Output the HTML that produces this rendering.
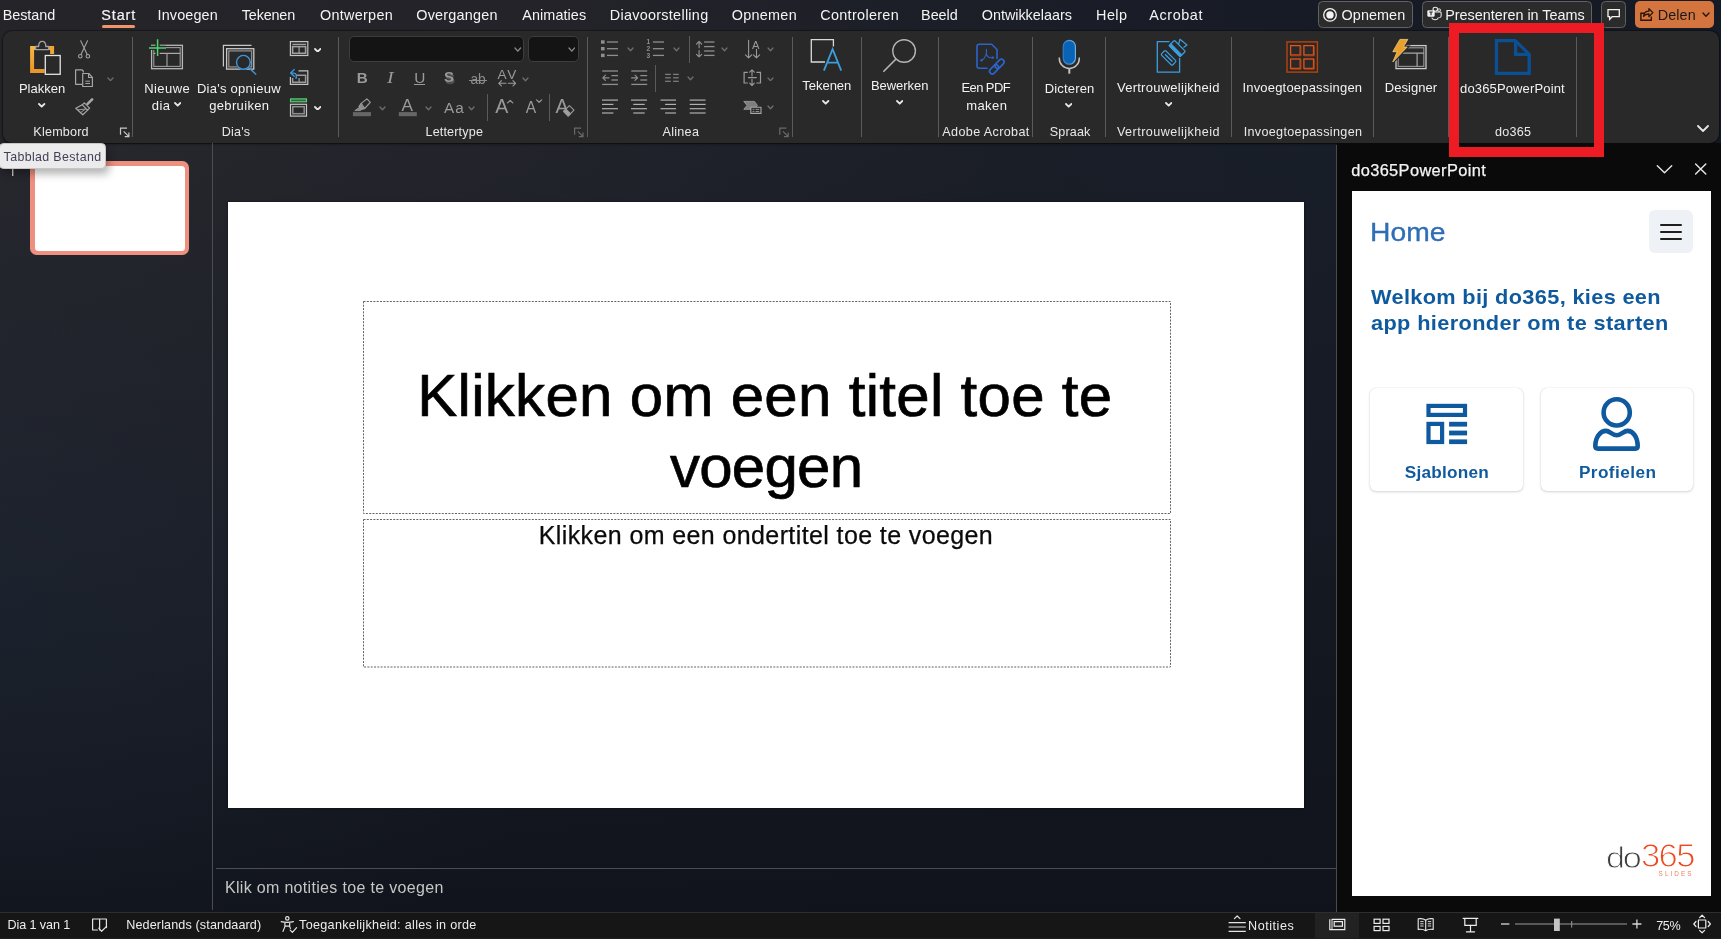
<!DOCTYPE html>
<html lang="nl"><head><meta charset="utf-8"><title>do365PowerPoint</title>
<style>
html,body{margin:0;padding:0;}
body{width:1721px;height:939px;overflow:hidden;position:relative;background:#14171f;font-family:"Liberation Sans",sans-serif;}
#root{will-change:transform;position:absolute;left:0;top:0;width:1721px;height:939px;overflow:hidden;background:radial-gradient(ellipse 620px 430px at 0px 600px,rgba(30,46,66,.30) 0%,rgba(30,46,66,.16) 50%,rgba(30,46,66,0) 100%),linear-gradient(to bottom,rgba(16,19,27,0) 0%,rgba(16,19,27,.5) 55%,rgba(16,19,27,1) 100%),linear-gradient(to right,#2b2b31 0%,#29292f 12%,#22242d 41%,#1c2029 58%,#1a202b 76%,#18202b 100%);}
.a{position:absolute;display:block;}
.t{position:absolute;display:block;white-space:pre;font-family:"Liberation Sans",sans-serif;}
</style></head><body><div id="root">
<div class="a" style="left:0.00px;top:0.00px;width:1721.00px;height:143.50px;background:linear-gradient(to right,#252429 0%,#232329 33%,#1d1f28 52%,#171b26 75%,#161a25 100%);"></div>
<div class="a" style="left:2.90px;top:30.50px;width:1716.10px;height:112.60px;background:#292929;border-radius:9px;box-shadow:0 0 0 1px rgba(0,0,0,.28),0 1px 3px rgba(0,0,0,.5);"></div>
<div class="a" style="left:212.00px;top:143.00px;width:1.00px;height:767.00px;background:#4c4d52;"></div>
<div class="a" style="left:215.50px;top:868.20px;width:1120.50px;height:1.00px;background:#4c4d52;"></div>
<div class="a" style="left:227.50px;top:201.50px;width:1076.80px;height:606.00px;background:#ffffff;box-shadow:0 0 2px rgba(0,0,0,.6);"></div>
<svg class="a" style="left:362.00px;top:300.00px;" width="811.00" height="369.00" viewBox="0 0 811 369" preserveAspectRatio="none" fill="none"><rect x="1.5" y="1.5" width="807" height="212" stroke="#646464" stroke-width="1" stroke-dasharray="2 1.3"/><rect x="1.5" y="219.5" width="807" height="147.5" stroke="#646464" stroke-width="1" stroke-dasharray="2 1.3"/></svg>
<div class="a" style="left:1336.00px;top:145.00px;width:1.00px;height:767.00px;background:#4a4a4a;"></div>
<div class="a" style="left:1337.00px;top:143.00px;width:384.00px;height:769.00px;background:#0a0a0a;"></div>
<div class="a" style="left:1352.20px;top:190.90px;width:359.20px;height:704.70px;background:#ffffff;"></div>
<div class="a" style="left:0.00px;top:911.70px;width:1721.00px;height:27.30px;background:#161616;border-top:1.2px solid #2e2e2e;box-sizing:border-box;"></div>
<div class="a" style="left:1314.70px;top:913.00px;width:44.30px;height:26.00px;background:#222222;"></div>
<span class="t" style="left:2.78px;top:7.91px;font-size:14.40px;line-height:14.40px;letter-spacing:-0.067px;color:#f4f4f4;">Bestand</span>
<span class="t" style="left:101.28px;top:7.91px;font-size:14.40px;line-height:14.40px;letter-spacing:0.882px;color:#f4f4f4;-webkit-text-stroke:0.2px #f4f4f4;">Start</span>
<span class="t" style="left:157.58px;top:7.91px;font-size:14.40px;line-height:14.40px;letter-spacing:0.127px;color:#f4f4f4;">Invoegen</span>
<span class="t" style="left:241.78px;top:7.91px;font-size:14.40px;line-height:14.40px;letter-spacing:-0.167px;color:#f4f4f4;">Tekenen</span>
<span class="t" style="left:320.08px;top:7.91px;font-size:14.40px;line-height:14.40px;letter-spacing:0.275px;color:#f4f4f4;">Ontwerpen</span>
<span class="t" style="left:416.28px;top:7.91px;font-size:14.40px;line-height:14.40px;letter-spacing:0.220px;color:#f4f4f4;">Overgangen</span>
<span class="t" style="left:522.28px;top:7.91px;font-size:14.40px;line-height:14.40px;letter-spacing:0.089px;color:#f4f4f4;">Animaties</span>
<span class="t" style="left:609.78px;top:7.91px;font-size:14.40px;line-height:14.40px;letter-spacing:0.285px;color:#f4f4f4;">Diavoorstelling</span>
<span class="t" style="left:731.78px;top:7.91px;font-size:14.40px;line-height:14.40px;letter-spacing:0.283px;color:#f4f4f4;">Opnemen</span>
<span class="t" style="left:820.28px;top:7.91px;font-size:14.40px;line-height:14.40px;letter-spacing:0.320px;color:#f4f4f4;">Controleren</span>
<span class="t" style="left:921.08px;top:7.91px;font-size:14.40px;line-height:14.40px;letter-spacing:-0.048px;color:#f4f4f4;">Beeld</span>
<span class="t" style="left:981.78px;top:7.91px;font-size:14.40px;line-height:14.40px;letter-spacing:-0.024px;color:#f4f4f4;">Ontwikkelaars</span>
<span class="t" style="left:1096.08px;top:7.91px;font-size:14.40px;line-height:14.40px;letter-spacing:0.408px;color:#f4f4f4;">Help</span>
<span class="t" style="left:1149.28px;top:7.91px;font-size:14.40px;line-height:14.40px;letter-spacing:0.602px;color:#f4f4f4;">Acrobat</span>
<div class="a" style="left:102.00px;top:25.00px;width:33.00px;height:2.50px;background:#f2946a;border-radius:1.5px;"></div>
<div class="a" style="left:1318.20px;top:1.00px;width:94.40px;height:27.00px;background:#2b2b2b;border:1px solid #616161;border-radius:4.5px;box-sizing:border-box;"></div>
<div class="a" style="left:1422.30px;top:1.00px;width:169.30px;height:27.00px;background:#2b2b2b;border:1px solid #616161;border-radius:4.5px;box-sizing:border-box;"></div>
<div class="a" style="left:1601.30px;top:1.00px;width:24.40px;height:27.00px;background:#2b2b2b;border:1px solid #616161;border-radius:4.5px;box-sizing:border-box;"></div>
<div class="a" style="left:1634.90px;top:1.00px;width:79.50px;height:26.80px;background:#d4743e;border-radius:5px;"></div>
<span class="t" style="left:1341.58px;top:7.91px;font-size:14.40px;line-height:14.40px;letter-spacing:0.067px;color:#f4f4f4;">Opnemen</span>
<span class="t" style="left:1445.28px;top:7.91px;font-size:14.40px;line-height:14.40px;letter-spacing:-0.019px;color:#f4f4f4;">Presenteren in Teams</span>
<span class="t" style="left:1657.78px;top:7.91px;font-size:14.40px;line-height:14.40px;letter-spacing:0.079px;color:#1a1a1a;">Delen</span>
<svg class="a" style="left:1322.00px;top:7.00px;" width="16.00" height="16.00" viewBox="0 0 16 16" preserveAspectRatio="none" fill="none"><circle cx="8" cy="7.9" r="6.3" stroke="#f4f4f4" stroke-width="1.3"/><circle cx="8" cy="7.9" r="3.7" fill="#f4f4f4"/></svg>
<svg class="a" style="left:1425.95px;top:6.40px;" width="16.40" height="14.16" viewBox="0 0 17 17" preserveAspectRatio="none" fill="none"><circle cx="9.6" cy="3.9" r="2.3" stroke="#eee" stroke-width="1.1"/><circle cx="13.6" cy="4.9" r="1.5" stroke="#eee" stroke-width="1"/><path d="M8.5 7.2h6.3a.9.9 0 0 1 .9.9v3.6a2.6 2.6 0 0 1-2.6 2.6h-.4a3.6 3.6 0 0 1-6.8-.3" stroke="#eee" stroke-width="1.1"/><rect x="1.4" y="5.2" width="7.6" height="7.6" rx="1" fill="#f0f0f0"/><path d="M3.4 7.3h3.6M5.2 7.3v3.8" stroke="#2b2b2b" stroke-width="1.2"/></svg>
<svg class="a" style="left:1606.00px;top:8.00px;" width="16.00" height="14.00" viewBox="0 0 16 14" preserveAspectRatio="none" fill="none"><path d="M2 1.7h11.3v7H6.2L3.6 11.4V8.7H2z" stroke="#f4f4f4" stroke-width="1.3" stroke-linejoin="miter"/></svg>
<svg class="a" style="left:1639.00px;top:6.00px;" width="16.00" height="16.00" viewBox="0 0 16 16" preserveAspectRatio="none" fill="none"><path d="M5.2 7.2H1.9v7h10.4v-3.6" stroke="#2a1608" stroke-width="1.4" fill="none"/><path d="M4.6 10.4c.3-3.4 2.4-5.2 5.3-5.2V2.7l4 3.9-4 3.9V8c-2.2-.1-3.9.5-5.3 2.4z" stroke="#2a1608" stroke-width="1.3" stroke-linejoin="round"/></svg>
<svg class="a" style="left:1702.00px;top:12.20px" width="8.00" height="5.20" viewBox="0 0 8.00 5.20" fill="none"><path d="M1 1 L4.00 4.20 L7.00 1" stroke="#2a1608" stroke-width="1.4" stroke-linecap="round" stroke-linejoin="round"/></svg>
<div class="a" style="left:132.10px;top:37.00px;width:1.00px;height:99.50px;background:#5a5a5a;"></div>
<div class="a" style="left:338.10px;top:37.00px;width:1.00px;height:99.50px;background:#5a5a5a;"></div>
<div class="a" style="left:586.80px;top:37.00px;width:1.00px;height:99.50px;background:#5a5a5a;"></div>
<div class="a" style="left:791.70px;top:37.00px;width:1.00px;height:99.50px;background:#5a5a5a;"></div>
<div class="a" style="left:861.00px;top:37.00px;width:1.00px;height:99.50px;background:#5a5a5a;"></div>
<div class="a" style="left:938.30px;top:37.00px;width:1.00px;height:99.50px;background:#5a5a5a;"></div>
<div class="a" style="left:1032.40px;top:37.00px;width:1.00px;height:99.50px;background:#5a5a5a;"></div>
<div class="a" style="left:1105.00px;top:37.00px;width:1.00px;height:99.50px;background:#5a5a5a;"></div>
<div class="a" style="left:1230.60px;top:37.00px;width:1.00px;height:99.50px;background:#5a5a5a;"></div>
<div class="a" style="left:1373.00px;top:37.00px;width:1.00px;height:99.50px;background:#5a5a5a;"></div>
<div class="a" style="left:1448.10px;top:37.00px;width:1.00px;height:99.50px;background:#5a5a5a;"></div>
<div class="a" style="left:1575.50px;top:37.00px;width:1.00px;height:99.50px;background:#5a5a5a;"></div>
<span class="t" style="left:18.95px;top:82.40px;font-size:13.00px;line-height:13.00px;letter-spacing:-0.008px;color:#f2f2f2;">Plakken</span>
<svg class="a" style="left:38.40px;top:103.25px" width="7.40" height="4.70" viewBox="0 0 7.40 4.70" fill="none"><path d="M1 1 L3.70 3.70 L6.40 1" stroke="#e6e6e6" stroke-width="1.8" stroke-linecap="round" stroke-linejoin="round"/></svg>
<span class="t" style="left:33.37px;top:126.43px;font-size:12.60px;line-height:12.60px;letter-spacing:0.191px;color:#e8e8e8;">Klembord</span>
<span class="t" style="left:144.15px;top:81.50px;font-size:13.00px;line-height:13.00px;letter-spacing:0.469px;color:#f2f2f2;">Nieuwe</span>
<span class="t" style="left:151.85px;top:99.30px;font-size:13.00px;line-height:13.00px;letter-spacing:0.376px;color:#f2f2f2;">dia</span>
<svg class="a" style="left:173.50px;top:102.15px" width="7.40" height="4.70" viewBox="0 0 7.40 4.70" fill="none"><path d="M1 1 L3.70 3.70 L6.40 1" stroke="#e6e6e6" stroke-width="1.8" stroke-linecap="round" stroke-linejoin="round"/></svg>
<span class="t" style="left:196.95px;top:81.50px;font-size:13.00px;line-height:13.00px;letter-spacing:0.264px;color:#f2f2f2;">Dia&#x27;s opnieuw</span>
<span class="t" style="left:209.15px;top:99.30px;font-size:13.00px;line-height:13.00px;letter-spacing:0.350px;color:#f2f2f2;">gebruiken</span>
<span class="t" style="left:221.87px;top:126.43px;font-size:12.60px;line-height:12.60px;letter-spacing:0.137px;color:#e8e8e8;">Dia&#x27;s</span>
<span class="t" style="left:425.47px;top:126.43px;font-size:12.60px;line-height:12.60px;letter-spacing:0.158px;color:#e8e8e8;">Lettertype</span>
<span class="t" style="left:662.47px;top:126.43px;font-size:12.60px;line-height:12.60px;letter-spacing:0.287px;color:#e8e8e8;">Alinea</span>
<span class="t" style="left:802.15px;top:78.90px;font-size:13.00px;line-height:13.00px;letter-spacing:0.008px;color:#f2f2f2;">Tekenen</span>
<svg class="a" style="left:822.30px;top:99.95px" width="7.40" height="4.70" viewBox="0 0 7.40 4.70" fill="none"><path d="M1 1 L3.70 3.70 L6.40 1" stroke="#e6e6e6" stroke-width="1.8" stroke-linecap="round" stroke-linejoin="round"/></svg>
<span class="t" style="left:870.95px;top:78.90px;font-size:13.00px;line-height:13.00px;letter-spacing:-0.044px;color:#f2f2f2;">Bewerken</span>
<svg class="a" style="left:896.00px;top:99.95px" width="7.40" height="4.70" viewBox="0 0 7.40 4.70" fill="none"><path d="M1 1 L3.70 3.70 L6.40 1" stroke="#e6e6e6" stroke-width="1.8" stroke-linecap="round" stroke-linejoin="round"/></svg>
<span class="t" style="left:961.55px;top:81.30px;font-size:13.00px;line-height:13.00px;letter-spacing:-0.607px;color:#f2f2f2;">Een PDF</span>
<span class="t" style="left:966.15px;top:99.00px;font-size:13.00px;line-height:13.00px;letter-spacing:0.445px;color:#f2f2f2;">maken</span>
<span class="t" style="left:942.37px;top:126.43px;font-size:12.60px;line-height:12.60px;letter-spacing:0.358px;color:#e8e8e8;">Adobe Acrobat</span>
<span class="t" style="left:1044.75px;top:81.90px;font-size:13.00px;line-height:13.00px;letter-spacing:0.170px;color:#f2f2f2;">Dicteren</span>
<svg class="a" style="left:1065.10px;top:103.35px" width="7.40" height="4.70" viewBox="0 0 7.40 4.70" fill="none"><path d="M1 1 L3.70 3.70 L6.40 1" stroke="#e6e6e6" stroke-width="1.8" stroke-linecap="round" stroke-linejoin="round"/></svg>
<span class="t" style="left:1049.77px;top:126.43px;font-size:12.60px;line-height:12.60px;letter-spacing:0.127px;color:#e8e8e8;">Spraak</span>
<span class="t" style="left:1116.95px;top:81.30px;font-size:13.00px;line-height:13.00px;letter-spacing:0.264px;color:#f2f2f2;">Vertrouwelijkheid</span>
<svg class="a" style="left:1164.60px;top:102.45px" width="7.40" height="4.70" viewBox="0 0 7.40 4.70" fill="none"><path d="M1 1 L3.70 3.70 L6.40 1" stroke="#e6e6e6" stroke-width="1.8" stroke-linecap="round" stroke-linejoin="round"/></svg>
<span class="t" style="left:1116.97px;top:126.43px;font-size:12.60px;line-height:12.60px;letter-spacing:0.451px;color:#e8e8e8;">Vertrouwelijkheid</span>
<span class="t" style="left:1242.45px;top:81.30px;font-size:13.00px;line-height:13.00px;letter-spacing:0.190px;color:#f2f2f2;">Invoegtoepassingen</span>
<span class="t" style="left:1243.67px;top:126.43px;font-size:12.60px;line-height:12.60px;letter-spacing:0.328px;color:#e8e8e8;">Invoegtoepassingen</span>
<span class="t" style="left:1384.75px;top:81.30px;font-size:13.00px;line-height:13.00px;letter-spacing:0.053px;color:#f2f2f2;">Designer</span>
<span class="t" style="left:1460.05px;top:81.50px;font-size:13.00px;line-height:13.00px;letter-spacing:0.141px;color:#f2f2f2;">do365PowerPoint</span>
<span class="t" style="left:1494.97px;top:126.43px;font-size:12.60px;line-height:12.60px;letter-spacing:0.281px;color:#e8e8e8;">do365</span>
<svg class="a" style="left:1696.60px;top:124.50px" width="12.00" height="7.00" viewBox="0 0 12.00 7.00" fill="none"><path d="M1 1 L6.00 6.00 L11.00 1" stroke="#e6e6e6" stroke-width="1.8" stroke-linecap="round" stroke-linejoin="round"/></svg>
<div class="a" style="left:348.80px;top:36.30px;width:175.50px;height:25.90px;background:#141414;border:1px solid #3d3d3d;border-radius:5px;box-sizing:border-box;"></div>
<div class="a" style="left:527.80px;top:36.30px;width:50.90px;height:25.90px;background:#141414;border:1px solid #3d3d3d;border-radius:5px;box-sizing:border-box;"></div>
<svg class="a" style="left:514.10px;top:47.30px" width="7.60" height="5.20" viewBox="0 0 7.60 5.20" fill="none"><path d="M1 1 L3.80 4.20 L6.60 1" stroke="#8a8a8a" stroke-width="1.3" stroke-linecap="round" stroke-linejoin="round"/></svg>
<svg class="a" style="left:567.70px;top:47.30px" width="7.60" height="5.20" viewBox="0 0 7.60 5.20" fill="none"><path d="M1 1 L3.80 4.20 L6.60 1" stroke="#8a8a8a" stroke-width="1.3" stroke-linecap="round" stroke-linejoin="round"/></svg>
<svg class="a" style="left:106.70px;top:76.75px" width="7.00" height="4.70" viewBox="0 0 7.00 4.70" fill="none"><path d="M1 1 L3.50 3.70 L6.00 1" stroke="#6e6e6e" stroke-width="1.3" stroke-linecap="round" stroke-linejoin="round"/></svg>
<svg class="a" style="left:313.70px;top:47.55px" width="7.40" height="4.70" viewBox="0 0 7.40 4.70" fill="none"><path d="M1 1 L3.70 3.70 L6.40 1" stroke="#e6e6e6" stroke-width="1.8" stroke-linecap="round" stroke-linejoin="round"/></svg>
<svg class="a" style="left:313.70px;top:105.65px" width="7.40" height="4.70" viewBox="0 0 7.40 4.70" fill="none"><path d="M1 1 L3.70 3.70 L6.40 1" stroke="#e6e6e6" stroke-width="1.8" stroke-linecap="round" stroke-linejoin="round"/></svg>
<span class="t" style="left:356.84px;top:69.73px;font-size:15.20px;line-height:15.20px;letter-spacing:-1.157px;color:#9a9a9a;font-weight:bold;">B</span>
<span class="t" style="left:386.8px;top:69.70px;font-size:16px;line-height:16px;color:#9a9a9a;font-style:italic;font-family:'Liberation Serif',serif;transform:scaleX(1.25);transform-origin:0 0;">I</span>
<span class="t" style="left:414.23px;top:69.86px;font-size:15.40px;line-height:15.40px;letter-spacing:-0.781px;color:#9a9a9a;">U</span>
<div class="a" style="left:414.00px;top:84.00px;width:10.50px;height:1.10px;background:#9a9a9a;"></div>
<span class="t" style="left:444px;top:69.40px;font-size:15px;line-height:15px;color:#9a9a9a;font-weight:bold;text-shadow:1px 1.6px 1px rgba(150,150,150,.45);">S</span>
<span class="t" style="left:470.41px;top:73.12px;font-size:13.80px;line-height:13.80px;letter-spacing:-0.070px;color:#8c8c8c;">ab</span>
<div class="a" style="left:469.00px;top:79.50px;width:18.10px;height:1.10px;background:#8c8c8c;"></div>
<span class="t" style="left:497.62px;top:68.49px;font-size:13.60px;line-height:13.60px;letter-spacing:1.527px;color:#9a9a9a;">AV</span>
<svg class="a" style="left:522.30px;top:76.85px" width="7.00" height="4.70" viewBox="0 0 7.00 4.70" fill="none"><path d="M1 1 L3.50 3.70 L6.00 1" stroke="#6e6e6e" stroke-width="1.3" stroke-linecap="round" stroke-linejoin="round"/></svg>
<svg class="a" style="left:378.70px;top:105.85px" width="7.00" height="4.70" viewBox="0 0 7.00 4.70" fill="none"><path d="M1 1 L3.50 3.70 L6.00 1" stroke="#6e6e6e" stroke-width="1.3" stroke-linecap="round" stroke-linejoin="round"/></svg>
<span class="t" style="left:401.44px;top:97.04px;font-size:17.20px;line-height:17.20px;letter-spacing:1.248px;color:#9a9a9a;">A</span>
<svg class="a" style="left:424.80px;top:105.85px" width="7.00" height="4.70" viewBox="0 0 7.00 4.70" fill="none"><path d="M1 1 L3.50 3.70 L6.00 1" stroke="#6e6e6e" stroke-width="1.3" stroke-linecap="round" stroke-linejoin="round"/></svg>
<span class="t" style="left:443.94px;top:99.95px;font-size:15.30px;line-height:15.30px;letter-spacing:1.216px;color:#9a9a9a;">Aa</span>
<svg class="a" style="left:468.40px;top:105.95px" width="7.00" height="4.70" viewBox="0 0 7.00 4.70" fill="none"><path d="M1 1 L3.50 3.70 L6.00 1" stroke="#6e6e6e" stroke-width="1.3" stroke-linecap="round" stroke-linejoin="round"/></svg>
<div class="a" style="left:487.10px;top:94.00px;width:1.00px;height:26.80px;background:#5a5a5a;"></div>
<span class="t" style="left:495.22px;top:97.11px;font-size:19.60px;line-height:19.60px;letter-spacing:1.087px;color:#9a9a9a;">A</span>
<span class="t" style="left:525.72px;top:100.49px;font-size:15.60px;line-height:15.60px;letter-spacing:1.655px;color:#9a9a9a;">A</span>
<div class="a" style="left:548.70px;top:94.00px;width:1.00px;height:26.80px;background:#5a5a5a;"></div>
<span class="t" style="left:555.52px;top:97.11px;font-size:19.60px;line-height:19.60px;letter-spacing:-1.013px;color:#9a9a9a;">A</span>
<svg class="a" style="left:627.40px;top:47.45px" width="7.00" height="4.70" viewBox="0 0 7.00 4.70" fill="none"><path d="M1 1 L3.50 3.70 L6.00 1" stroke="#6e6e6e" stroke-width="1.3" stroke-linecap="round" stroke-linejoin="round"/></svg>
<span class="t" style="left:646.6px;top:38.40px;font-size:6.6px;line-height:7px;color:#8e8e8e;font-weight:bold;">1</span>
<span class="t" style="left:646.6px;top:45.10px;font-size:6.6px;line-height:7px;color:#8e8e8e;font-weight:bold;">2</span>
<span class="t" style="left:646.6px;top:51.80px;font-size:6.6px;line-height:7px;color:#8e8e8e;font-weight:bold;">3</span>
<svg class="a" style="left:673.20px;top:47.45px" width="7.00" height="4.70" viewBox="0 0 7.00 4.70" fill="none"><path d="M1 1 L3.50 3.70 L6.00 1" stroke="#6e6e6e" stroke-width="1.3" stroke-linecap="round" stroke-linejoin="round"/></svg>
<div class="a" style="left:688.60px;top:36.10px;width:1.00px;height:26.50px;background:#5a5a5a;"></div>
<svg class="a" style="left:720.50px;top:47.45px" width="7.00" height="4.70" viewBox="0 0 7.00 4.70" fill="none"><path d="M1 1 L3.50 3.70 L6.00 1" stroke="#6e6e6e" stroke-width="1.3" stroke-linecap="round" stroke-linejoin="round"/></svg>
<span class="t" style="left:752.04px;top:39.52px;font-size:11.20px;line-height:11.20px;letter-spacing:1.550px;color:#9a9a9a;">A</span>
<svg class="a" style="left:767.40px;top:47.45px" width="7.00" height="4.70" viewBox="0 0 7.00 4.70" fill="none"><path d="M1 1 L3.50 3.70 L6.00 1" stroke="#6e6e6e" stroke-width="1.3" stroke-linecap="round" stroke-linejoin="round"/></svg>
<div class="a" style="left:655.00px;top:65.00px;width:1.00px;height:26.60px;background:#5a5a5a;"></div>
<svg class="a" style="left:686.70px;top:76.35px" width="7.00" height="4.70" viewBox="0 0 7.00 4.70" fill="none"><path d="M1 1 L3.50 3.70 L6.00 1" stroke="#6e6e6e" stroke-width="1.3" stroke-linecap="round" stroke-linejoin="round"/></svg>
<svg class="a" style="left:767.40px;top:76.65px" width="7.00" height="4.70" viewBox="0 0 7.00 4.70" fill="none"><path d="M1 1 L3.50 3.70 L6.00 1" stroke="#6e6e6e" stroke-width="1.3" stroke-linecap="round" stroke-linejoin="round"/></svg>
<svg class="a" style="left:767.40px;top:105.35px" width="7.00" height="4.70" viewBox="0 0 7.00 4.70" fill="none"><path d="M1 1 L3.50 3.70 L6.00 1" stroke="#6e6e6e" stroke-width="1.3" stroke-linecap="round" stroke-linejoin="round"/></svg>
<div class="a" style="left:1449.1px;top:23.3px;width:155px;height:133.5px;border:10.2px solid #ed1c24;box-sizing:border-box;"></div>
<svg class="a" style="left:0;top:0" width="1721" height="160" viewBox="0 0 1721 160" fill="none"><defs><linearGradient id="og" x1="0" y1="0" x2="0" y2="1"><stop offset="0" stop-color="#f6b545"/><stop offset="1" stop-color="#ea9526"/></linearGradient></defs><path d="M36 47.9H32.1V70.9H44.6" stroke="url(#og)" stroke-width="4" stroke-linejoin="miter" fill="none"/><path d="M48.6 47.9H52.1V54" stroke="#f0a636" stroke-width="4" fill="none"/><path d="M35.6 49.6V46.5H38.6C38.6 39.6 45.8 39.6 45.8 46.5H48.7V49.6Z" stroke="#a2a2a2" stroke-width="1.3" fill="#292929" stroke-linejoin="round"/><rect x="45.3" y="55.5" width="14.9" height="18.8" stroke="#e4e4e4" stroke-width="1.3" fill="#292929"/><g stroke="#a6a6a6" stroke-width="1.05" fill="none" stroke-linecap="round"><path d="M80.7 40.8L87.2 54.5M87.5 40.8L81 54.5"/><circle cx="80.3" cy="56.2" r="1.75"/><circle cx="87.9" cy="56.2" r="1.75"/></g><g stroke="#a6a6a6" stroke-width="1.2" fill="none" stroke-linejoin="round"><path d="M82 84.3H75.6V69.9H81.6Q83.3 69.9 83.4 72.5"/><path d="M82.7 73.5H88.8L92.4 77.3V86.5H82.7Z" fill="#292929"/><path d="M88.6 73.7V77.5H92.2"/><path d="M85.3 81.2H90M85.3 83.5H90" stroke-width="1"/></g><g stroke="#a6a6a6" stroke-width="1.2" fill="none" stroke-linejoin="round" stroke-linecap="round"><path d="M92.1 99.4L87.6 103.9" stroke-width="2.6"/><path d="M84.3 102.8L89.6 108.1L87.6 110.1L82.3 104.8Z"/><path d="M82.3 104.8L75.8 108.2L82.8 114.8L87.6 110.1"/><path d="M78.2 109.9L85.5 109M80.6 112.6L85.5 109" stroke-width="0.9"/></g><g stroke="#c8c8c8" stroke-width="1.2" fill="none"><path d="M120.5 134.7V128.2H127.0"/><path d="M123.7 131.4L128.7 136.4M128.9 132.4V136.6H124.7"/></g><g stroke="#6a6a6a" stroke-width="1.2" fill="none"><path d="M574.6 134.7V128.2H581.1"/><path d="M577.8 131.4L582.8 136.4M583.0 132.4V136.6H578.8"/></g><g stroke="#6a6a6a" stroke-width="1.2" fill="none"><path d="M779.8 134.7V128.2H786.3"/><path d="M783.0 131.4L788.0 136.4M788.2 132.4V136.6H784.0"/></g><g fill="none" stroke="#b8b8b8" stroke-width="1.3"><rect x="151.6" y="45.3" width="30.8" height="23.4"/><rect x="153.8" y="47.6" width="26.4" height="18.8" stroke="#9a9a9a" stroke-width="1.1"/><path d="M153.8 53.4H180.2M167 53.4V66.4" stroke="#a8a8a8" stroke-width="1.1"/></g><path d="M149 47.9H166M157.6 39.2V56" stroke="#292929" stroke-width="4.2"/><path d="M149 47.9H166M157.6 39.2V56" stroke="#4ed66c" stroke-width="1.5"/><g fill="none"><path d="M223.4 66.5V45.3H251.5" stroke="#c8c8c8" stroke-width="1.2"/><rect x="226.6" y="48.7" width="27.2" height="20.4" stroke="#c8c8c8" stroke-width="1.3"/><rect x="228.8" y="50.9" width="22.8" height="16" stroke="#8c8c8c" stroke-width="1.3"/><circle cx="243.4" cy="62.3" r="7.6" fill="#292929"/><circle cx="243.4" cy="62.3" r="6.9" stroke="#3a96dd" stroke-width="1.4"/><path d="M248.4 67.4L256.2 74.4" stroke="#3a96dd" stroke-width="1.4"/></g><g fill="none" stroke="#c4c4c4" stroke-width="1.2"><rect x="290.4" y="41.6" width="17.4" height="13.9"/><rect x="292.6" y="46.6" width="13" height="6.7" stroke="#a0a0a0" stroke-width="1.6"/><path d="M292.4 44.4H306M299.1 46.6V53.3" stroke="#a0a0a0"/></g><g fill="none" stroke="#c4c4c4" stroke-width="1.2"><path d="M298.5 70.8H307.8V84.4H290.4V77"/><path d="M296.5 75.2H305.6V82.2H292.6V78" stroke="#9a9a9a" stroke-width="1.5"/><path d="M299.1 78V82" stroke="#9a9a9a"/><path d="M296 78.4C297.7 73.6 294.5 72.6 291 72.9M294.2 69.6L290.6 72.9L294.2 76.2" stroke="#3a96dd" stroke-width="1.4" stroke-linecap="round" stroke-linejoin="round"/></g><g fill="none"><rect x="290.5" y="98.9" width="16" height="2.9" fill="#2c6b3c" stroke="#5fd37a" stroke-width="1.1"/><rect x="290.5" y="104.3" width="16" height="11.8" stroke="#c4c4c4" stroke-width="1.2"/><rect x="292.8" y="106.7" width="11.4" height="7" stroke="#8e8e8e" stroke-width="1.5"/></g><g stroke="#9a9a9a" stroke-width="1.1" fill="none" stroke-linecap="round" stroke-linejoin="round"><path d="M498.8 83.3H506M501.4 80.7L498.8 83.3L501.4 85.9M508.4 83.3H515.6M513 80.7L515.6 83.3L513 85.9"/></g><rect x="352.9" y="112.1" width="18.1" height="4.1" fill="#666"/><g stroke="#9a9a9a" stroke-width="1.2" fill="none" stroke-linejoin="round"><path d="M361.2 103.4L366.9 98.9L370.3 102.4L364.6 108.5Z"/><path d="M361.2 103.4L359 106.5L361.7 109.3L364.6 108.5" fill="#8a8a8a"/><path d="M359.3 107.4L354.8 110.6H360.6L361.7 109.3Z" fill="#8a8a8a" stroke-width="0.8"/></g><rect x="398.8" y="112.1" width="18" height="4.1" fill="#666"/><path d="M507.6 102.9L510.2 100.5L512.8 102.9" stroke="#9a9a9a" stroke-width="1.2" fill="none" stroke-linecap="round" stroke-linejoin="round"/><path d="M536.5 99.9L539.1 102.3L541.7 99.9" stroke="#9a9a9a" stroke-width="1.2" fill="none" stroke-linecap="round" stroke-linejoin="round"/><g stroke="#9a9a9a" stroke-width="1.1" stroke-linejoin="round"><path d="M569.4 105.6L574 110.1L568.2 116L563.6 111.4Z" fill="#292929"/><path d="M565.9 109.1L570.5 113.7L568.2 116L563.6 111.4Z" fill="#a0a0a0"/></g><rect x="601" y="40.3" width="3.6" height="3.4" fill="#8e8e8e"/><path d="M607.0 42.0H618.0" stroke="#8e8e8e" stroke-width="1.3"/><rect x="601" y="47.0" width="3.6" height="3.4" fill="#8e8e8e"/><path d="M607.0 48.7H618.0" stroke="#8e8e8e" stroke-width="1.3"/><rect x="601" y="53.7" width="3.6" height="3.4" fill="#8e8e8e"/><path d="M607.0 55.4H618.0" stroke="#8e8e8e" stroke-width="1.3"/><path d="M652.9 42.0H664.0" stroke="#8e8e8e" stroke-width="1.3"/><path d="M652.9 48.7H664.0" stroke="#8e8e8e" stroke-width="1.3"/><path d="M652.9 55.4H664.0" stroke="#8e8e8e" stroke-width="1.3"/><path d="M704.1 42.0H714.5" stroke="#8e8e8e" stroke-width="1.3"/><path d="M704.1 46.6H714.5" stroke="#8e8e8e" stroke-width="1.3"/><path d="M704.1 51.0H714.5" stroke="#8e8e8e" stroke-width="1.3"/><path d="M704.1 55.4H714.5" stroke="#8e8e8e" stroke-width="1.3"/><g stroke="#8e8e8e" stroke-width="1.2" fill="none" stroke-linecap="round" stroke-linejoin="round"><path d="M699.1 41.6V47.8M696.5 44.1L699.1 41.5L701.7 44.1M699.1 50.6V56.8M696.5 54.3L699.1 56.9L701.7 54.3"/></g><g stroke="#9a9a9a" stroke-width="1.1" fill="none" stroke-linecap="round" stroke-linejoin="round"><path d="M748.6 40.2V57.8M745.5 54.8L748.6 57.9L751.7 54.8M756.5 49.2V57.8M753.4 54.8L756.5 57.9L759.6 54.8"/></g><path d="M602.2 71.0H618.0" stroke="#8e8e8e" stroke-width="1.3"/><path d="M602.2 84.4H618.0" stroke="#8e8e8e" stroke-width="1.3"/><path d="M611.4 75.6H618.0" stroke="#8e8e8e" stroke-width="1.3"/><path d="M611.4 80.0H618.0" stroke="#8e8e8e" stroke-width="1.3"/><g stroke="#8e8e8e" stroke-width="1.2" fill="none" stroke-linecap="round" stroke-linejoin="round"><path d="M602.8 77.8H609M605.4 75.2L602.8 77.8L605.4 80.4"/></g><path d="M631.3 71.0H647.2" stroke="#8e8e8e" stroke-width="1.3"/><path d="M631.3 84.4H647.2" stroke="#8e8e8e" stroke-width="1.3"/><path d="M640.3 75.6H647.2" stroke="#8e8e8e" stroke-width="1.3"/><path d="M640.3 80.0H647.2" stroke="#8e8e8e" stroke-width="1.3"/><g stroke="#8e8e8e" stroke-width="1.2" fill="none" stroke-linecap="round" stroke-linejoin="round"><path d="M631.6 77.8H637.6M635 75.2L637.6 77.8L635 80.4"/></g><path d="M665.1 74.4H670.8" stroke="#7c7c7c" stroke-width="1.3"/><path d="M673.1 74.4H678.7" stroke="#7c7c7c" stroke-width="1.3"/><path d="M665.1 77.8H670.8" stroke="#7c7c7c" stroke-width="1.3"/><path d="M673.1 77.8H678.7" stroke="#7c7c7c" stroke-width="1.3"/><path d="M665.1 81.3H670.8" stroke="#7c7c7c" stroke-width="1.3"/><path d="M673.1 81.3H678.7" stroke="#7c7c7c" stroke-width="1.3"/><g stroke="#9a9a9a" stroke-width="1.2" fill="none" stroke-linecap="square" stroke-linejoin="miter"><path d="M747.2 72.3H744.1V83H747.2M757 72.3H760.5V83H757"/></g><g stroke="#9a9a9a" stroke-width="1.1" fill="none" stroke-linecap="round" stroke-linejoin="round"><path d="M748.4 77.6H756.4M752 70V76M749.7 72.2L752 69.9L754.3 72.2M752 79.2V85.4M749.7 83.2L752 85.5L754.3 83.2"/></g><path d="M602.0 100.1H618.0" stroke="#b0b0b0" stroke-width="1.2"/><path d="M602.0 104.4H613.4" stroke="#b0b0b0" stroke-width="1.2"/><path d="M602.0 108.7H618.0" stroke="#b0b0b0" stroke-width="1.2"/><path d="M602.0 113.0H613.4" stroke="#b0b0b0" stroke-width="1.2"/><path d="M631.0 100.1H647.0" stroke="#b0b0b0" stroke-width="1.2"/><path d="M633.3 104.4H644.7" stroke="#b0b0b0" stroke-width="1.2"/><path d="M631.0 108.7H647.0" stroke="#b0b0b0" stroke-width="1.2"/><path d="M633.3 113.0H644.7" stroke="#b0b0b0" stroke-width="1.2"/><path d="M660.5 100.1H676.0" stroke="#b0b0b0" stroke-width="1.2"/><path d="M665.1 104.4H676.0" stroke="#b0b0b0" stroke-width="1.2"/><path d="M660.5 108.7H676.0" stroke="#b0b0b0" stroke-width="1.2"/><path d="M665.1 113.0H676.0" stroke="#b0b0b0" stroke-width="1.2"/><path d="M689.7 100.1H705.6" stroke="#b0b0b0" stroke-width="1.2"/><path d="M689.7 104.4H705.6" stroke="#b0b0b0" stroke-width="1.2"/><path d="M689.7 108.7H705.6" stroke="#b0b0b0" stroke-width="1.2"/><path d="M689.7 113.0H705.6" stroke="#b0b0b0" stroke-width="1.2"/><g stroke-linejoin="round"><path d="M743.8 101.4H754.5L757.4 105.4L754.5 109.3H743.8L747 105.4Z" fill="#7e7e7e" stroke="#9a9a9a" stroke-width="0.9"/><rect x="750.8" y="107.2" width="10.2" height="6.2" fill="#292929" stroke="#a8a8a8" stroke-width="1.1"/><path d="M752.6 109.4H754.4M755.6 109.4H759.2M752.6 111.5H754.4M755.6 111.5H759.2" stroke="#9a9a9a" stroke-width="0.9"/></g><path d="M833.4 46.6V39.6H811.3V62H825" stroke="#dadada" stroke-width="1.3" fill="none"/><path d="M823.9 70.6L832.6 49.2L841.2 70.6M827 62.6H838.2" stroke="#3a9ee0" stroke-width="1.8" fill="none" stroke-linejoin="miter"/><circle cx="904.1" cy="51" r="11.3" stroke="#b6b6b6" stroke-width="1.4" fill="none"/><path d="M895.8 59.2L883.8 71.3" stroke="#b6b6b6" stroke-width="1.6" stroke-linecap="round"/><g stroke="#2b64cb" fill="none" stroke-linecap="round" stroke-linejoin="round"><path d="M987 68.3H979.2Q977 68.3 977 66.1V46.4Q977 44.2 979.2 44.2H991.6L997 49.5V58.4" stroke-width="1.6"/><path d="M986.4 49.4C987.2 53.5 985.5 58.3 981.6 60.3M986.4 54.5C987.5 56.8 989.8 58 992.6 57.6" stroke-width="1.1"/><circle cx="981.4" cy="60.4" r="0.9" stroke-width="0.9"/><circle cx="992.8" cy="57.6" r="0.9" stroke-width="0.9"/><g transform="rotate(-46 996.8 66.6)" stroke-width="1.7"><rect x="987.6" y="63.9" width="10.6" height="5.4" rx="2.7"/><rect x="995.4" y="63.9" width="10.6" height="5.4" rx="2.7"/></g></g><defs><linearGradient id="mg" x1="0" y1="0" x2="1" y2="0"><stop offset="0" stop-color="#2f7fcc"/><stop offset="1" stop-color="#78b4ea"/></linearGradient></defs><path d="M1059.3 57.6V58.4A10 10 0 0 0 1079.3 58.4V57.6" stroke="#c2c2c2" stroke-width="1.5" fill="none"/><path d="M1069.3 68.4V73.7" stroke="#c2c2c2" stroke-width="2"/><rect x="1063.2" y="40.4" width="12.2" height="23.9" rx="6.1" fill="#0a64b6" stroke="url(#mg)" stroke-width="1.1"/><g stroke="#3a9ee0" fill="none" stroke-linejoin="round"><path d="M1169.5 41.7H1157.3V72.2H1179.6V57.8" stroke-width="1.3"/><g transform="translate(1170 55) rotate(-45)"><rect x="-6.1" y="-6.8" width="6.1" height="15.7" rx="1.2" stroke-width="1.2"/><path d="M-3.05 -3.4V5.9" stroke-width="1.4" stroke-linecap="round"/><rect x="5.9" y="-7.3" width="7.6" height="15.6" rx="1" stroke-width="1.2"/><rect x="5.9" y="-7.3" width="2.9" height="15.6" fill="#3a9ee0" stroke-width="0.6"/><path d="M13.8 -1.6L18.2 -4.1L19.1 4.9L14.8 4.3" stroke-width="1.2"/></g></g><rect x="1287" y="41.9" width="30.4" height="30.2" stroke="#b4440f" stroke-width="1.4" fill="none"/><rect x="1290.6" y="45.6" width="9.6" height="9.4" stroke="#e4541a" stroke-width="1.3" fill="none"/><path d="M1301.0 45.8V55.8H1290.8" stroke="#a8400f" stroke-width="1" fill="none"/><rect x="1303.9" y="45.6" width="9.6" height="9.4" stroke="#e4541a" stroke-width="1.3" fill="none"/><path d="M1314.3 45.8V55.8H1304.1" stroke="#a8400f" stroke-width="1" fill="none"/><rect x="1290.6" y="59.0" width="9.6" height="9.4" stroke="#e4541a" stroke-width="1.3" fill="none"/><path d="M1301.0 59.2V69.2H1290.8" stroke="#a8400f" stroke-width="1" fill="none"/><rect x="1303.9" y="59.0" width="9.6" height="9.4" stroke="#e4541a" stroke-width="1.3" fill="none"/><path d="M1314.3 59.2V69.2H1304.1" stroke="#a8400f" stroke-width="1" fill="none"/><g fill="none"><rect x="1396" y="45.6" width="30" height="23" stroke="#cacaca" stroke-width="1.3"/><rect x="1398.2" y="47.8" width="25.6" height="18.6" stroke="#8e8e8e" stroke-width="1.2"/><path d="M1398.2 53.1H1423.8M1417.1 53.1V66.4" stroke="#a8a8a8" stroke-width="1.2"/></g><path d="M1399.9 39.4H1407.8L1403.4 47H1407.2L1392.8 62L1397.2 51.7H1392.8Z" fill="#292929" stroke="#292929" stroke-width="3"/><path d="M1399.9 39.4H1407.8L1403.4 47H1407.2L1392.8 62L1397.2 51.7H1392.8Z" fill="#e9a02e" stroke="#f7cf7c" stroke-width="0.8" stroke-linejoin="round"/><path d="M1496.5 40.6H1515.2L1529.2 54.4V73.4H1496.5Z" stroke="#0b4f94" stroke-width="3.3" fill="none" stroke-linejoin="miter"/><path d="M1515.6 40.6V54.4H1529.2" stroke="#0b4f94" stroke-width="3.3" fill="none"/></svg>
<div class="a" style="left:12.1px;top:160px;width:2.3px;height:15.7px;overflow:hidden;"><span class="t" style="left:-3.9px;top:4.1px;font-size:15px;line-height:15px;color:#cfcfcf;">1</span></div>
<div class="a" style="left:30.20px;top:161.30px;width:158.80px;height:93.60px;background:#ef8f7f;border-radius:6.5px;"></div>
<div class="a" style="left:34.60px;top:165.60px;width:150.60px;height:85.40px;background:#ffffff;border-radius:3.5px;"></div>
<div class="a" style="left:-1.50px;top:143.40px;width:107.50px;height:25.20px;background:#ebebeb;border:1px solid #c6c6c6;border-radius:4.5px;box-sizing:border-box;box-shadow:3px 5px 8px rgba(0,0,0,.30);"></div>
<span class="t" style="left:3.58px;top:150.80px;font-size:12.40px;line-height:12.40px;letter-spacing:0.368px;color:#453d58;">Tabblad Bestand</span>
<span class="t" style="left:417.20px;top:365.91px;font-size:60.00px;line-height:60.00px;letter-spacing:0.306px;color:#000;-webkit-text-stroke:0.7px #000;">Klikken om een titel toe te</span>
<span class="t" style="left:670.00px;top:437.41px;font-size:60.00px;line-height:60.00px;letter-spacing:-0.769px;color:#000;-webkit-text-stroke:0.7px #000;">voegen</span>
<span class="t" style="left:538.75px;top:523.04px;font-size:25.00px;line-height:25.00px;letter-spacing:0.390px;color:#0a0a0a;-webkit-text-stroke:0.25px #0a0a0a;">Klikken om een ondertitel toe te voegen</span>
<span class="t" style="left:224.90px;top:880.06px;font-size:16.00px;line-height:16.00px;letter-spacing:0.324px;color:#c6c6c6;">Klik om notities toe te voegen</span>
<span class="t" style="left:1351.18px;top:161.62px;font-size:16.40px;line-height:16.40px;letter-spacing:0.369px;color:#f4f4f4;-webkit-text-stroke:0.25px #f4f4f4;">do365PowerPoint</span>
<svg class="a" style="left:0;top:0" width="1721" height="200" viewBox="0 0 1721 200" fill="none"><path d="M1657.3 165.8L1664.5 172.8L1671.7 165.8" stroke="#e8e8e8" stroke-width="1.4" fill="none" stroke-linecap="round" stroke-linejoin="round"/><path d="M1695.6 163.9L1705.8 174.1M1705.8 163.9L1695.6 174.1" stroke="#e8e8e8" stroke-width="1.4" stroke-linecap="round"/></svg>
<span class="t" style="left:1369.58px;top:218.65px;font-size:26.40px;line-height:26.40px;letter-spacing:0.054px;color:#2f6eb6;-webkit-text-stroke:0.35px #2f6eb6;transform:scaleX(1.070);transform-origin:0 0;">Home</span>
<div class="a" style="left:1648.60px;top:209.60px;width:44.60px;height:43.80px;background:#eef2f7;border-radius:6px;"></div>
<div class="a" style="left:1660.00px;top:224.00px;width:22.20px;height:2.00px;background:#1f1f1f;border-radius:1px;"></div>
<div class="a" style="left:1660.00px;top:230.90px;width:22.20px;height:2.00px;background:#1f1f1f;border-radius:1px;"></div>
<div class="a" style="left:1660.00px;top:237.80px;width:22.20px;height:2.00px;background:#1f1f1f;border-radius:1px;"></div>
<span class="t" style="left:1370.65px;top:285.92px;font-size:21.00px;line-height:21.00px;letter-spacing:0.329px;color:#0f5a9e;font-weight:bold;transform:scaleX(1.035);transform-origin:0 0;">Welkom bij do365, kies een</span>
<span class="t" style="left:1370.65px;top:312.42px;font-size:21.00px;line-height:21.00px;letter-spacing:0.365px;color:#0f5a9e;font-weight:bold;transform:scaleX(1.035);transform-origin:0 0;">app hieronder om te starten</span>
<div class="a" style="left:1369.70px;top:387.80px;width:153.80px;height:102.80px;background:#ffffff;border-radius:6px;box-shadow:0 1px 3px rgba(0,0,0,.16),0 0 1px rgba(0,0,0,.18);"></div>
<div class="a" style="left:1540.50px;top:387.80px;width:152.70px;height:102.80px;background:#ffffff;border-radius:6px;box-shadow:0 1px 3px rgba(0,0,0,.16),0 0 1px rgba(0,0,0,.18);"></div>
<span class="t" style="left:1404.84px;top:463.74px;font-size:17.20px;line-height:17.20px;letter-spacing:0.217px;color:#0f5a9e;font-weight:bold;">Sjablonen</span>
<span class="t" style="left:1578.94px;top:463.74px;font-size:17.20px;line-height:17.20px;letter-spacing:0.428px;color:#0f5a9e;font-weight:bold;">Profielen</span>
<svg class="a" style="left:1352px;top:380px" width="360" height="120" viewBox="1352 380 360 120" fill="none"><rect x="1428.5" y="405.9" width="36.5" height="9" stroke="#0f5a9e" stroke-width="4.2" fill="none"/><rect x="1428.5" y="423.9" width="13.6" height="18.1" stroke="#0f5a9e" stroke-width="4.2" fill="none"/><rect x="1449.1" y="421.8" width="18" height="4.8" fill="#0f5a9e"/><rect x="1449.1" y="430.6" width="18" height="4.8" fill="#0f5a9e"/><rect x="1449.1" y="439.4" width="18" height="4.7" fill="#0f5a9e"/><circle cx="1616.7" cy="412.4" r="13.1" stroke="#0f5a9e" stroke-width="4.6" fill="none"/><path d="M1598 448.6H1635.4Q1637.7 448.6 1637.7 446.3C1637.7 437 1633 430.9 1627.5 430.9C1623.5 430.9 1621.5 435.2 1616.7 435.2C1611.9 435.2 1609.9 430.9 1605.9 430.9C1600.4 430.9 1595.3 437 1595.3 446.3Q1595.3 448.6 1598 448.6Z" stroke="#0f5a9e" stroke-width="4.6" fill="none" stroke-linejoin="round"/></svg>
<span class="t" style="left:1605.6px;top:842.61px;font-size:30px;line-height:30px;letter-spacing:-1.9px;color:#3f3f3f;-webkit-text-stroke:0.9px #fff;transform:scaleX(1.14);transform-origin:0 0;">do</span>
<span class="t" style="left:1640.6px;top:839.37px;font-size:33.6px;line-height:33px;letter-spacing:-1.6px;transform:scaleX(1.03);transform-origin:0 0;color:#ee4a1f;-webkit-text-stroke:1px #fff;">365</span>
<span class="t" style="left:1658.6px;top:870.2px;font-size:6.4px;line-height:7px;letter-spacing:2.05px;color:#f0805f;">SLIDES</span>
<span class="t" style="left:7.57px;top:919.03px;font-size:12.60px;line-height:12.60px;letter-spacing:-0.098px;color:#ededed;">Dia 1 van 1</span>
<span class="t" style="left:126.27px;top:919.03px;font-size:12.60px;line-height:12.60px;letter-spacing:0.123px;color:#ededed;">Nederlands (standaard)</span>
<span class="t" style="left:299.07px;top:919.03px;font-size:12.60px;line-height:12.60px;letter-spacing:0.308px;color:#ededed;">Toegankelijkheid: alles in orde</span>
<span class="t" style="left:1248.07px;top:919.53px;font-size:12.60px;line-height:12.60px;letter-spacing:0.521px;color:#ededed;">Notities</span>
<span class="t" style="left:1656.17px;top:919.53px;font-size:12.60px;line-height:12.60px;letter-spacing:-0.379px;color:#ededed;">75%</span>
<svg class="a" style="left:0;top:905px" width="1721" height="34" viewBox="0 905 1721 34" fill="none"><g stroke="#e4e4e4" stroke-width="1.2" fill="none" stroke-linejoin="round" stroke-linecap="round"><path d="M99.6 919.4V930M92.6 919H99.6M92.6 919V930H97.5M99.6 919H106.4V927.6"/><path d="M98.8 928.2L101.6 931.3L106.6 926.4"/></g><g stroke="#e4e4e4" stroke-width="1.2" fill="none" stroke-linejoin="round" stroke-linecap="round"><circle cx="287.3" cy="918.4" r="1.7"/><path d="M281.2 921.6C284 922.6 290.6 922.6 293.4 921.6M284.9 922.4V926.6L283 931.4M289.7 922.4V926.6L290.4 928.4M284.9 926.2H289.7"/><path d="M290.2 930.2L292.4 932.4L296.6 927.6"/></g><g stroke="#e4e4e4" stroke-width="1.2" fill="none" stroke-linecap="round" stroke-linejoin="round"><path d="M1234.4 918.6L1237.2 916L1240 918.6"/><path d="M1228.6 922.6H1245.8M1228.6 927H1245.8M1228.6 931.4H1245.8" stroke-linecap="butt"/></g><g stroke="#ececec" stroke-width="1.2" fill="none"><path d="M1329.8 919.3V929.7H1344.8V919.3H1331.6"/><rect x="1334.2" y="921.6" width="8.2" height="4.6"/><path d="M1332 919.3V929.7" stroke-width="1"/></g><rect x="1374.1" y="919.2" width="6" height="4.2" stroke="#ececec" stroke-width="1.2" fill="none"/><rect x="1383.0" y="919.2" width="6" height="4.2" stroke="#ececec" stroke-width="1.2" fill="none"/><rect x="1374.1" y="926.4" width="6" height="4.2" stroke="#ececec" stroke-width="1.2" fill="none"/><rect x="1383.0" y="926.4" width="6" height="4.2" stroke="#ececec" stroke-width="1.2" fill="none"/><g stroke="#ececec" stroke-width="1.1" fill="none" stroke-linejoin="round"><path d="M1425.7 920.2C1423.6 918.6 1420.8 918.4 1418.2 918.8V929.4C1420.8 929 1423.6 929.2 1425.7 930.8C1427.8 929.2 1430.6 929 1433.2 929.4V918.8C1430.6 918.4 1427.8 918.6 1425.7 920.2ZM1425.7 920.2V930.8"/><path d="M1420.2 921.6H1423.6M1420.2 923.8H1423.6M1420.2 926H1423.6M1427.8 921.6H1431.2M1427.8 923.8H1431.2M1427.8 926H1431.2" stroke-width="0.9"/></g><g stroke="#ececec" stroke-width="1.2" fill="none" stroke-linecap="round"><path d="M1463.2 918.4H1477.8"/><path d="M1464.8 918.6V925.4H1476.2V918.6"/><path d="M1470.5 925.4V931.6M1466.4 931.8H1474.6"/></g><path d="M1501 924H1509.4" stroke="#d8d8d8" stroke-width="1.3"/><path d="M1515 924H1627" stroke="#9a9a9a" stroke-width="1"/><path d="M1571.7 921V927.6" stroke="#9a9a9a" stroke-width="1"/><rect x="1554" y="918.6" width="5.8" height="12.4" fill="#c4c4c4"/><path d="M1632.4 924H1641.4M1636.9 919.5V928.5" stroke="#d8d8d8" stroke-width="1.3"/><g stroke="#ececec" stroke-width="1.2" fill="none" stroke-linecap="round" stroke-linejoin="round"><rect x="1698.4" y="920" width="7.4" height="8"/><path d="M1699.6 917.6L1702.1 915.2L1704.6 917.6M1699.6 930.4L1702.1 932.8L1704.6 930.4M1696 921.5L1693.8 924L1696 926.5M1708.2 921.5L1710.4 924L1708.2 926.5"/></g></svg>
<div class="a" style="left:0.00px;top:937.50px;width:1721.00px;height:1.50px;background:#1f1f1f;"></div>
</div></body></html>
